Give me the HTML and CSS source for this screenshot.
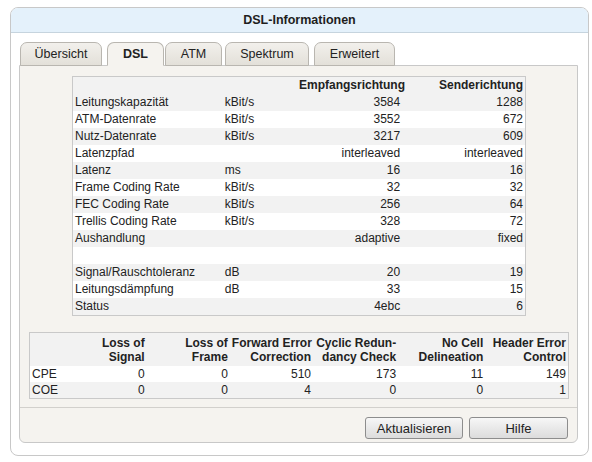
FILE: index.html
```html
<!DOCTYPE html>
<html lang="de">
<head>
<meta charset="utf-8">
<title>DSL-Informationen</title>
<link rel="stylesheet" href="styles.css">
</head>
<body>
<div class="dialog">
  <div class="title">DSL-Informationen</div>
  <div class="body">
    <div class="tabs">
      <div class="tab t-overview">Übersicht</div>
      <div class="tab t-dsl active">DSL</div>
      <div class="tab t-atm">ATM</div>
      <div class="tab t-spectrum">Spektrum</div>
      <div class="tab t-extended">Erweitert</div>
    </div>
    <div class="panel">
      <div class="content">
        <table class="dsl">
          <colgroup>
            <col class="c-label"><col class="c-unit"><col class="c-down"><col class="c-up">
          </colgroup>
          <tr class="head"><td></td><td></td><td class="num">Empfangsrichtung</td><td class="num">Senderichtung</td></tr>
          <tr><td>Leitungskapazität</td><td>kBit/s</td><td class="num">3584</td><td class="num">1288</td></tr>
          <tr><td>ATM-Datenrate</td><td>kBit/s</td><td class="num">3552</td><td class="num">672</td></tr>
          <tr><td>Nutz-Datenrate</td><td>kBit/s</td><td class="num">3217</td><td class="num">609</td></tr>
          <tr><td>Latenzpfad</td><td></td><td class="num">interleaved</td><td class="num">interleaved</td></tr>
          <tr><td>Latenz</td><td>ms</td><td class="num">16</td><td class="num">16</td></tr>
          <tr><td>Frame Coding Rate</td><td>kBit/s</td><td class="num">32</td><td class="num">32</td></tr>
          <tr><td>FEC Coding Rate</td><td>kBit/s</td><td class="num">256</td><td class="num">64</td></tr>
          <tr><td>Trellis Coding Rate</td><td>kBit/s</td><td class="num">328</td><td class="num">72</td></tr>
          <tr><td>Aushandlung</td><td></td><td class="num">adaptive</td><td class="num">fixed</td></tr>
          <tr><td></td><td></td><td></td><td></td></tr>
          <tr><td>Signal/Rauschtoleranz</td><td>dB</td><td class="num">20</td><td class="num">19</td></tr>
          <tr><td>Leitungsdämpfung</td><td>dB</td><td class="num">33</td><td class="num">15</td></tr>
          <tr><td>Status</td><td></td><td class="num">4ebc</td><td class="num">6</td></tr>
        </table>

        <table class="errors">
          <colgroup>
            <col class="e-label"><col class="e-los"><col class="e-lof"><col class="e-fec"><col class="e-crc"><col class="e-ncd"><col class="e-hec">
          </colgroup>
          <tr class="head">
            <td></td>
            <td class="num">Loss of<br>Signal</td>
            <td class="num">Loss of<br>Frame</td>
            <td class="num">Forward Error<br>Correction</td>
            <td class="num">Cyclic Redun-<br>dancy Check</td>
            <td class="num">No Cell<br>Delineation</td>
            <td class="num">Header Error<br>Control</td>
          </tr>
          <tr><td>CPE</td><td class="num">0</td><td class="num">0</td><td class="num">510</td><td class="num">173</td><td class="num">11</td><td class="num">149</td></tr>
          <tr class="alt"><td>COE</td><td class="num">0</td><td class="num">0</td><td class="num">4</td><td class="num">0</td><td class="num">0</td><td class="num">1</td></tr>
        </table>
      </div>
      <div class="buttons">
        <button class="btn btn-refresh">Aktualisieren</button>
        <button class="btn btn-help">Hilfe</button>
      </div>
    </div>
  </div>
</div>
</body>
</html>
```
FILE: styles.css
```css
html, body {
  margin: 0;
  padding: 0;
  background: #ffffff;
}

body {
  font-family: "Liberation Sans", Arial, sans-serif;
  font-size: 12px;
  color: #222222;
}

.dialog {
  margin: 7px 0 0 10px;
  width: 577px;
  border: 1px solid #c8c8c8;
  border-radius: 8px;
  background: #ffffff;
  overflow: hidden;
}

.title {
  height: 24px;
  line-height: 24px;
  background: #e4f1fb;
  border-bottom: 1px solid #c6d4de;
  text-align: center;
  font-weight: bold;
  font-size: 12.5px;
  color: #1e1e1e;
}

.body {
  padding: 9px 10px 12px 8px;
}

.tabs {
  display: flex;
  align-items: flex-end;
  padding-left: 1px;
  margin-bottom: -1px;
  position: relative;
  z-index: 1;
}

.tab {
  box-sizing: border-box;
  height: 24px;
  line-height: 22px;
  text-align: center;
  font-size: 12.5px;
  border: 1px solid #b9b6b0;
  border-radius: 7px 7px 0 0;
  background: linear-gradient(#f2f0ec, #e3e0d9);
  color: #222222;
}

.t-overview { width: 82px; }
.t-dsl { width: 57px; margin-left: 5px; }
.t-atm { width: 57px; margin-left: 1px; }
.t-spectrum { width: 84px; margin-left: 3px; }
.t-extended { width: 81px; margin-left: 5px; }

.tab.active {
  font-weight: bold;
  background: #f5f3ef;
  border-bottom-color: #f5f3ef;
}

.panel {
  border: 1px solid #c8c8c8;
  border-radius: 0 0 6px 6px;
  background: #f5f3ef;
}

.content {
  padding: 10px 0 8px 0;
}

table {
  border-collapse: collapse;
  table-layout: fixed;
  background: #f2f2f2;
  border: 1px solid #c9c9c9;
}

td {
  padding: 0 2px 0 2px;
  white-space: nowrap;
  overflow: visible;
}

td.num {
  text-align: right;
}

.dsl {
  margin-left: 52px;
  width: 454px;
}

.dsl td {
  height: 17px;
  line-height: 17px;
}

.dsl tr:nth-child(odd) {
  background: #ffffff;
}

.dsl tr.head {
  background: #f2f2f2;
  font-weight: bold;
}

.c-label { width: 150px; }
.c-unit { width: 74px; }
.c-down { width: 105px; }
.c-up { width: 123px; }

.errors {
  margin: 16px 0 0 9px;
  width: 540px;
}

.errors td {
  height: 16px;
  line-height: 16px;
  background: #ffffff;
}

.errors tr.head td {
  background: #f2f2f2;
  font-weight: bold;
  line-height: 14px;
  padding-top: 3px;
  padding-bottom: 2px;
}

.errors tr.alt td {
  background: #f2f2f2;
}

.e-label { width: 34px; }
.e-los { width: 83px; }
.e-lof { width: 83px; }
.e-fec { width: 83px; }
.e-crc { width: 85px; }
.e-ncd { width: 87px; }
.e-hec { width: 83px; }

.buttons {
  display: flex;
  justify-content: flex-end;
  gap: 6px;
  border-top: 1px solid #d2d0cc;
  padding: 9px 9px 3px 0;
}

.btn {
  box-sizing: border-box;
  height: 22px;
  padding: 0;
  font-family: "Liberation Sans", Arial, sans-serif;
  font-size: 13px;
  color: #222222;
  border: 1px solid #8d8d8d;
  border-radius: 3px;
  background: linear-gradient(#f7f7f7, #e9e9e9 50%, #dcdcdc);
}

.btn-refresh { width: 98px; }
.btn-help { width: 99px; }
```
